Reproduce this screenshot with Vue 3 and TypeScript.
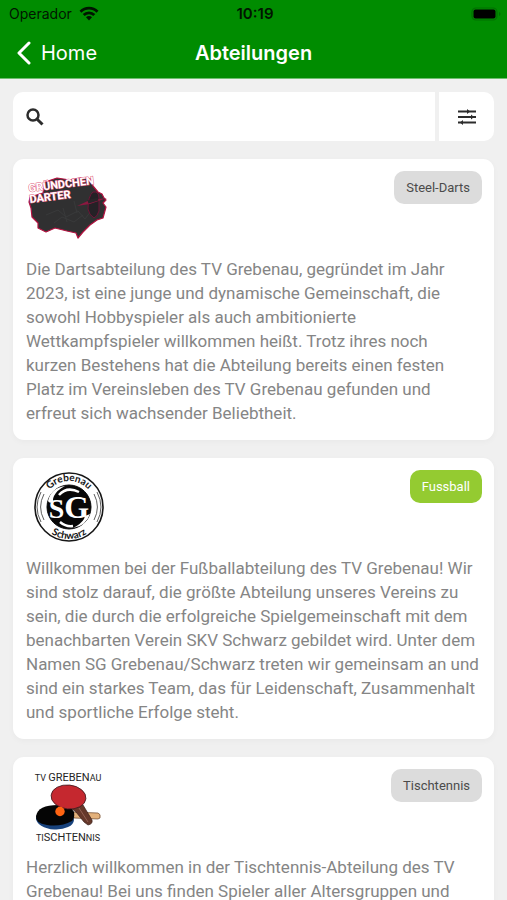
<script setup lang="ts">
import { ref } from 'vue'

interface Department {
  id: 'darts' | 'football' | 'tabletennis'
  tag: string
  highlighted: boolean
  text: string
}

const query = ref<string>('')

const departments: Department[] = [
  {
    id: 'darts',
    tag: 'Steel-Darts',
    highlighted: false,
    text: 'Die Dartsabteilung des TV Grebenau, gegründet im Jahr 2023, ist eine junge und dynamische Gemeinschaft, die sowohl Hobbyspieler als auch ambitionierte Wettkampfspieler willkommen heißt. Trotz ihres noch kurzen Bestehens hat die Abteilung bereits einen festen Platz im Vereinsleben des TV Grebenau gefunden und erfreut sich wachsender Beliebtheit.',
  },
  {
    id: 'football',
    tag: 'Fussball',
    highlighted: true,
    text: 'Willkommen bei der Fußballabteilung des TV Grebenau! Wir sind stolz darauf, die größte Abteilung unseres Vereins zu sein, die durch die erfolgreiche Spielgemeinschaft mit dem benachbarten Verein SKV Schwarz gebildet wird. Unter dem Namen SG Grebenau/Schwarz treten wir gemeinsam an und sind ein starkes Team, das für Leidenschaft, Zusammenhalt und sportliche Erfolge steht.',
  },
  {
    id: 'tabletennis',
    tag: 'Tischtennis',
    highlighted: false,
    text: 'Herzlich willkommen in der Tischtennis-Abteilung des TV Grebenau! Bei uns finden Spieler aller Altersgruppen und',
  },
]
</script>

<template>
  <div class="app">
    <header class="header">
      <div class="status">
        <div class="carrier">
          <span>Operador</span>
          <svg width="20" height="15" viewBox="0 0 20 15" aria-hidden="true">
            <g fill="none" stroke="#001500" stroke-width="2.8">
              <path d="M1.5 5.7a12 12 0 0 1 17 0" />
              <path d="M4.7 9a7.5 7.5 0 0 1 10.6 0" />
            </g>
            <path d="M7 11.3a4.2 4.2 0 0 1 6 0L10 14.5z" fill="#001500" />
          </svg>
        </div>
        <time class="clock">10:19</time>
        <svg class="battery" width="30" height="14" viewBox="0 0 30 14" aria-hidden="true">
          <rect x="1" y="1" width="25" height="12" rx="4" fill="none" stroke="#007000" stroke-width="1.2" />
          <rect x="2.5" y="2.5" width="22" height="9" rx="2" fill="#000" />
          <path d="M28 5v4q1.5-.6 1.5-2T28 5z" fill="#007000" />
        </svg>
      </div>
      <nav class="nav">
        <a class="back" href="#">
          <svg width="16" height="24" viewBox="0 0 16 24" aria-hidden="true">
            <path d="M13 2 3 12l10 10" fill="none" stroke="#fff" stroke-width="3" stroke-linecap="round" stroke-linejoin="round" />
          </svg>
          <span>Home</span>
        </a>
        <h1 class="title">Abteilungen</h1>
      </nav>
    </header>

    <main class="content">
      <form class="search" role="search" @submit.prevent>
        <label class="field">
          <svg width="18" height="18" viewBox="0 0 18 18" aria-hidden="true">
            <circle cx="7" cy="7" r="5.5" fill="none" stroke="#2c2c2c" stroke-width="2.5" />
            <path d="m11.2 11.2 5.3 5.3" stroke="#2c2c2c" stroke-width="3" />
          </svg>
          <input v-model="query" type="search" aria-label="Suche" />
        </label>
        <button class="filter" type="button" aria-label="Filter">
          <svg width="18" height="16" viewBox="0 0 18 16" aria-hidden="true">
            <path d="M0 2.5h18M0 8h18M0 13.5h18" stroke="#2c2c2c" stroke-width="1.8" />
            <path d="M9 0l3 2.5L9 5zM13 5.5 16 8l-3 2.5zM5 11l-3 2.5L5 16z" fill="#2c2c2c" />
          </svg>
        </button>
      </form>

      <article v-for="item in departments" :key="item.id" class="card">
        <div class="card-head">
          <svg v-if="item.id === 'darts'" class="logo" viewBox="0 0 84 72" role="img" aria-label="Gründchen Darter">
            <path
              d="M4 26 17 22 19 11 31 7 44 9 54 7 65 8 67 15 72 21 76 23 78 27 80 29 77 32 80 36 77 47 71 49 64 54 57 61 52 67 50 62 41 60 29 57 20 61 12 57 12 52 6 46 5 37 3 31z"
              fill="#303031" stroke="#b31240" stroke-width="1.2" stroke-linejoin="round" />
            <path d="m20 44 12-5 8 7 12-6 7 8 6-8M28 52l8-6 12 5 9-7M37 37l4 14M48 30l3 12" fill="none" stroke="#393a3b" stroke-width="1" />
            <path d="M67 21q6-1 6 6v13q-2 6-5 7-5-3-6-9 0-13 5-17z" fill="#252126" stroke="#711438" stroke-width="1" />
            <path d="M51 35 64 29 81 27 64 33z" fill="#8c1840" />
            <path d="m62 31 10-3" stroke="#292529" stroke-width="3" />
            <g class="darts-lettering">
              <text x="3" y="21" transform="rotate(-7 3 21)">GRÜNDCHEN</text>
              <text x="4" y="32" transform="rotate(-7 4 32)">DARTER</text>
            </g>
          </svg>

          <svg v-else-if="item.id === 'football'" class="logo" viewBox="0 0 84 72" role="img" aria-label="Grebenau Schwarz">
            <defs>
              <path id="arc-top" d="M17 37a26 26 0 0 1 52 0" />
              <path id="arc-bottom" d="M11 37a32 32 0 0 0 64 0" />
            </defs>
            <circle cx="43" cy="37" r="34" fill="#fff" stroke="#161616" stroke-width="1.6" />
            <path d="M15 22a32 32 0 0 0 0 30M18 24a28 28 0 0 0 0 26M71 22a32 32 0 0 1 0 30M68 24a28 28 0 0 1 0 26" fill="none" stroke="#333" stroke-width=".8" />
            <circle cx="43" cy="37" r="22" fill="#080808" stroke="#080808" stroke-width="1" />
            <path d="M22 31q3-13 17-15-8 4-11 10-2 4 0 6-5 2-6-1z" fill="#fff" />
            <path d="M64 44q-4 12-17 14 8-4 11-9l1-3z" fill="#fff" />
            <path d="M53 22q-12-6-20 3M34 52q6 5 13 4" fill="none" stroke="#fff" stroke-width="2.5" />
            <text class="monogram" x="43" y="48"><tspan class="letter-s">S</tspan><tspan>G</tspan></text>
            <g class="ring-lettering">
              <text><textPath href="#arc-top" startOffset="50%">Grebenau</textPath></text>
              <text><textPath href="#arc-bottom" startOffset="50%">Schwarz</textPath></text>
            </g>
          </svg>

          <svg v-else class="logo" viewBox="0 0 84 72" role="img" aria-label="TV Grebenau Tischtennis">
            <path d="m46 43 26 1q3 1 2 5l-2 1-24-1z" fill="#e3b17b" stroke="#684226" stroke-width=".7" />
            <ellipse cx="29" cy="50" rx="19" ry="10.5" fill="#18427c" transform="rotate(3 29 50)" />
            <path d="M48 43q-3-7-16-7-20 0-22 11-1 7 11 9 14 2 25-4 3-3 2-9z" fill="#050505" />
            <path d="m46 40 11-4 9 15q1 4-4 5l-4-3-8-10z" fill="#65382a" stroke="#3a201a" stroke-width=".7" />
            <path d="m53 39 9 14" stroke="#936052" stroke-width="1" />
            <ellipse cx="42.5" cy="28" rx="17.5" ry="12" fill="#c5282f" stroke="#411c20" stroke-width=".8" transform="rotate(6 42.5 28)" />
            <circle cx="34" cy="42.5" r="4.7" fill="#ff6412" />
            <g class="tennis-lettering">
              <text x="42" y="12"><tspan class="small">TV </tspan>GREBEN<tspan class="small">AU</tspan></text>
              <text x="42" y="72"><tspan class="small">TI</tspan>SCHTEN<tspan class="small">NIS</tspan></text>
            </g>
          </svg>
          <span class="tag" :class="{ 'tag-green': item.highlighted }">{{ item.tag }}</span>
        </div>
        <p class="text">{{ item.text }}</p>
      </article>
    </main>
  </div>
</template>

<style>
body {
  margin: 0;
  background: #f0f0f0;
}
</style>

<style scoped>
* {
  box-sizing: border-box;
}
.app {
  display: flex;
  flex-direction: column;
  height: 100vh;
  background: #f0f0f0;
  font-family: Roboto, sans-serif;
}
.header {
  flex: none;
  background: #008c00;
  border-bottom: 1px solid #6fbf6f;
  font-family: Inter, sans-serif;
}
.status {
  display: grid;
  grid-template-columns: 1fr auto 1fr;
  align-items: center;
  height: 27px;
  padding: 0 6px 0 9px;
  color: #001500;
  font-size: 14px;
}
.carrier {
  display: flex;
  align-items: center;
  gap: 7px;
}
.clock {
  font-size: 15px;
  font-weight: 600;
}
.battery {
  justify-self: end;
}
.nav {
  display: grid;
  grid-template-columns: 1fr auto 1fr;
  align-items: center;
  height: 51px;
  padding: 0 16px;
  color: #fff;
}
.back {
  display: flex;
  align-items: center;
  gap: 9px;
  color: #fff;
  font-size: 20px;
  text-decoration: none;
}
.title {
  margin: 0;
  font-size: 20px;
  font-weight: 600;
}
.content {
  display: flex;
  flex: 1;
  flex-direction: column;
  gap: 18px;
  min-height: 0;
  padding: 13px;
  overflow-y: auto;
  scrollbar-width: none;
}
.search {
  display: flex;
  flex: none;
  gap: 4px;
  height: 49px;
}
.field {
  display: flex;
  flex: 1;
  align-items: center;
  gap: 12px;
  min-width: 0;
  padding: 0 13px;
  border-radius: 10px 0 0 10px;
  background: #fff;
}
.field input {
  flex: 1;
  min-width: 0;
  padding: 0;
  border: 0;
  outline: 0;
  background: none;
  color: #333;
  font: 16px Roboto, sans-serif;
}
.filter {
  display: flex;
  align-items: center;
  justify-content: center;
  width: 55px;
  padding: 0;
  border: 0;
  border-radius: 0 10px 10px 0;
  background: #fff;
}
.card {
  flex: none;
  padding: 12px 12px 12px 13px;
  border-radius: 11px;
  background: #fff;
  box-shadow: 0 2px 6px rgba(0, 0, 0, 0.03);
}
.card-head {
  display: flex;
  align-items: flex-start;
  justify-content: space-between;
  height: 72px;
}
.logo {
  width: 84px;
  height: 72px;
  overflow: visible;
}
.tag {
  padding: 0 12px;
  border-radius: 10px;
  background: #dcdcdc;
  color: #4b4b4b;
  font-size: 13px;
  line-height: 33px;
}
.tag-green {
  background: #94cb31;
  color: #fff;
}
.text {
  margin: 14px 0 0;
  padding: 0 1px 3px 0;
  color: #858585;
  font-size: 17px;
  line-height: 24px;
}
.darts-lettering {
  fill: #fff;
  stroke: #df5b7e;
  stroke-width: 1px;
  paint-order: stroke;
  font: bold 11px Roboto, sans-serif;
}
.monogram {
  fill: #fff;
  text-anchor: middle;
  font: bold 32px "Liberation Serif", serif;
}
.letter-s {
  font-size: 28px;
}
.ring-lettering {
  fill: #151515;
  text-anchor: middle;
  font: bold 10px Lato, sans-serif;
}
.tennis-lettering {
  fill: #252525;
  text-anchor: middle;
  font: 11px Roboto, sans-serif;
}
.small {
  font-size: 9px;
}
</style>
